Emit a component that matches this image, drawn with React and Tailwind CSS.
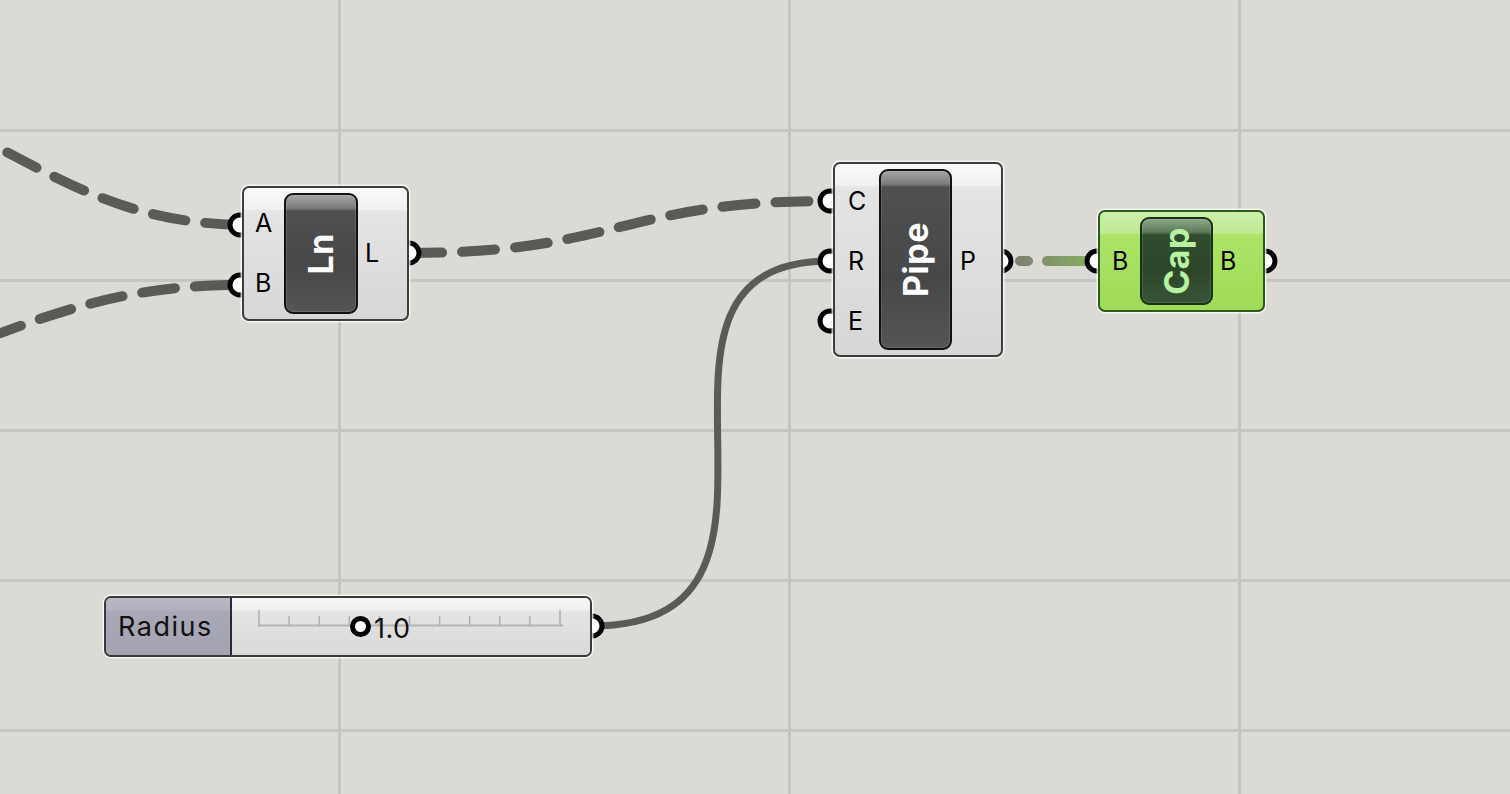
import React from 'react';

const NODES = [
  {
    id: 'ln',
    name: 'Ln',
    box: 'left-[242px] top-[186px] w-[167px] h-[135px]',
    leftCol: 'w-[40px] pl-[11px]',
    rightCol: 'pl-[7px]',
    inner: 'w-[74px]',
    inputs: ['A', 'B'],
    outputs: ['L'],
  },
  {
    id: 'pipe',
    name: 'Pipe',
    box: 'left-[833px] top-[162px] w-[170px] h-[195px]',
    leftCol: 'w-[44px] pl-[13px] pt-[3px]',
    rightCol: 'pl-[8px] pt-[3px]',
    inner: 'w-[73px]',
    inputs: ['C', 'R', 'E'],
    outputs: ['P'],
  },
  {
    id: 'cap',
    name: 'Cap',
    box: 'left-[1098px] top-[210px] w-[167px] h-[102px]',
    leftCol: 'w-[40px] pl-[12px]',
    rightCol: 'pl-[7px]',
    inner: 'w-[73px]',
    inputs: ['B'],
    outputs: ['B'],
    green: true,
  },
];

// grip centres, shared by wires and the circles drawn under the boxes
const GRIPS = [
  [240, 225], [240, 285], [409, 253],
  [830, 201], [830, 261], [830, 321], [1001, 261],
  [1097, 261], [1265, 261],
  [592, 626],
];

const TICKS = [0, 1, 2, 3, 4, 5, 6, 7, 8, 9, 10];

const Canvas = () => (
  <svg className="absolute inset-0" width="1510" height="794">
    <defs>
      <linearGradient id="capWire" gradientUnits="userSpaceOnUse" x1="1005" y1="0" x2="1090" y2="0">
        <stop offset="0" stopColor="#7a7a72" />
        <stop offset="1" stopColor="#88ad62" />
      </linearGradient>
    </defs>

    {/* grid */}
    <g stroke="#c7c5bf" strokeWidth="3">
      {[130.5, 280.5, 430.5, 580.5, 730.5].map((y) => (
        <line key={y} x1="0" y1={y} x2="1510" y2={y} />
      ))}
      {[339.5, 789.5, 1239.5].map((x) => (
        <line key={x} x1={x} y1="0" x2={x} y2="794" />
      ))}
    </g>

    {/* wires */}
    <g fill="none" stroke="#5b5a56" strokeLinecap="round">
      <path d="M -40 128 C 60 178, 120 222, 240 225" strokeWidth="10" strokeDasharray="33 20" />
      <path d="M -60 355 C 40 320, 110 285, 240 285" strokeWidth="10" strokeDasharray="33 20" />
      <path d="M 409 253 C 620 253, 620 201, 830 201" strokeWidth="10" strokeDasharray="33 20" />
      <path d="M 592 626 C 845 626, 595 261, 830 261" strokeWidth="7" />
    </g>
    <g stroke="url(#capWire)" strokeWidth="10" strokeLinecap="round">
      <line x1="1020" y1="261" x2="1028" y2="261" />
      <line x1="1047" y1="261" x2="1097" y2="261" />
    </g>

    {/* grips */}
    {GRIPS.map(([cx, cy]) => (
      <circle key={`${cx}-${cy}`} cx={cx} cy={cy} r="10" fill="#fff" stroke="#000" strokeWidth="5" />
    ))}
  </svg>
);

const Node = ({ node }) => {
  const boxTone = node.green
    ? 'border-[#2c5a1c] bg-[linear-gradient(180deg,#cdf0aa_0px,#bfe992_21px,#ade468_23px,#9fdb56_100%)]'
    : 'border-[#3d3d3d] bg-[linear-gradient(180deg,#f9f9f9_0px,#f1f1f1_21px,#e4e4e4_23px,#d7d7d7_100%)]';
  const capsuleTone = node.green
    ? 'border-[#173016] bg-[linear-gradient(180deg,#8aa888_0px,#5d7b5b_13px,#304c2e_16px,#2c462a_60%,#385436_100%)]'
    : 'border-[#111111] bg-[linear-gradient(180deg,#a4a4a4_0px,#7c7c7c_13px,#505050_16px,#474747_60%,#555555_100%)]';
  const nameTone = node.green ? 'text-[#b7f1a2]' : 'text-white';

  return (
    <div
      className={`absolute flex rounded-[7px] border-2 shadow-[0_0_0_1.5px_rgba(255,255,255,0.75)] ${node.box} ${boxTone}`}
    >
      <div className={`flex flex-col justify-center ${node.leftCol}`}>
        {node.inputs.map((p, i) => (
          <div key={i} className="h-[60px] flex items-center text-[25px] tracking-[0.5px] text-black leading-none">
            {p}
          </div>
        ))}
      </div>

      <div
        className={`my-[5px] flex items-center justify-center rounded-[9px] border-2 shadow-[inset_0_0_0_1px_rgba(255,255,255,0.12)] ${node.inner} ${capsuleTone}`}
      >
        <span className={`[writing-mode:vertical-rl] rotate-180 text-[34px] font-bold leading-none tracking-[0.5px] ${nameTone}`}>
          {node.name}
        </span>
      </div>

      <div className={`flex-1 flex flex-col justify-center ${node.rightCol}`}>
        {node.outputs.map((p, i) => (
          <div key={i} className="h-[60px] flex items-center text-[25px] tracking-[0.5px] text-black leading-none">
            {p}
          </div>
        ))}
      </div>
    </div>
  );
};

const Slider = () => (
  <div className="absolute left-[104px] top-[596px] w-[488px] h-[61px] flex overflow-hidden rounded-[7px] border-2 border-[#3a3a3a] shadow-[0_0_0_1.5px_rgba(255,255,255,0.75)]">
    <div className="w-[126px] flex items-center pl-[12px] border-r-2 border-[#2a2a2a] bg-[linear-gradient(180deg,#b9b9c6_0px,#b1b1be_12px,#a8a8b6_14px,#a3a3b1_100%)] text-[27px] tracking-[1.5px] text-[#111] leading-none">
      Radius
    </div>
    <div className="relative flex-1 flex items-center bg-[linear-gradient(180deg,#f6f6f6_0px,#efefef_12px,#e4e4e4_14px,#d9d9d9_100%)]">
      <svg className="absolute left-0 top-0" width="360" height="57">
        <line x1="26" y1="27.5" x2="331" y2="27.5" stroke="#b3b3b3" strokeWidth="2" />
        {TICKS.map((t) => {
          const x = 27 + t * 30.1;
          const top = t === 0 || t === 10 ? 12 : 18;
          return <line key={t} x1={x} y1={top} x2={x} y2="27.5" stroke="#b0b0b0" strokeWidth="1.5" />;
        })}
      </svg>
      <div className="relative ml-[118px] flex items-center">
        <div className="w-[21px] h-[21px] rounded-full border-[5px] border-black bg-white" />
        <span className="ml-[3px] mt-[4px] text-[27px] tracking-[0.5px] text-[#111] leading-none">1.0</span>
      </div>
    </div>
  </div>
);

const App = () => {
  return (
    <div className="relative w-[1510px] h-[794px] overflow-hidden bg-[#dcdad4] font-['Inter','Liberation_Sans',sans-serif]">
      <Canvas />
      {NODES.map((n) => (
        <Node key={n.id} node={n} />
      ))}
      <Slider />
    </div>
  );
};

export default App;
